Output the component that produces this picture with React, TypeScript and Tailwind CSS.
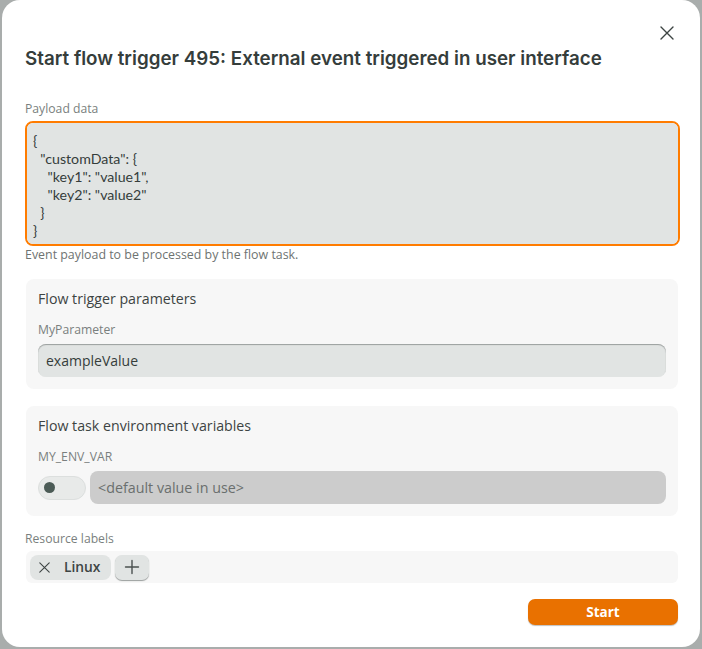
import React, { useState } from 'react';

const payload = `{
  "customData": {
    "key1": "value1",
    "key2": "value2"
  }
}`;

const CloseIcon = ({ size = 14, className = '' }: { size?: number; className?: string }) => (
  <svg width={size} height={size} viewBox="0 0 14 14" className={className} fill="none">
    <path d="M1 1L13 13M13 1L1 13" stroke="currentColor" strokeWidth="1.4" strokeLinecap="round" />
  </svg>
);

const PlusIcon = () => (
  <svg width="16" height="16" viewBox="0 0 16 16" fill="none">
    <path d="M8 1.5V14.5M1.5 8H14.5" stroke="currentColor" strokeWidth="1.4" strokeLinecap="round" />
  </svg>
);

const App = () => {
  const [text, setText] = useState(payload);
  const [param, setParam] = useState('exampleValue');

  return (
    <div
      className="w-[702px] h-[649px] bg-[#a9adac] pl-[2px] overflow-hidden"
      style={{ fontFamily: '"Open Sans", "Lato", sans-serif' }}
    >
      <div className="w-[698px] h-[647px] bg-white rounded-[18px] flex flex-col px-[23px]">
        <div className="flex justify-end pt-[26px] pr-[3px] h-[40px]">
          <button className="text-[#3d4443]">
            <CloseIcon />
          </button>
        </div>

        <h2
          className="text-[18.8px] font-semibold text-[#353d3b] leading-[24px] mt-[7px]"
          style={{ fontFamily: '"Inter", "Lato", sans-serif' }}
        >
          Start flow trigger 495: External event triggered in user interface
        </h2>

        <label className="text-[12.2px] text-[#7a7f7e] leading-[16px] mt-[30px] mb-[4px]">Payload data</label>
        <textarea
          value={text}
          onChange={(e) => setText(e.target.value)}
          spellCheck={false}
          className="block w-[655px] h-[125px] bg-[#e1e4e3] border-2 border-[#ff7c00] rounded-[8px] px-[6px] pt-[9px] pb-[7px] text-[14.2px] leading-[18px] text-[#353d3b] resize-none outline-none whitespace-pre"
          style={{ fontFamily: '"Lato", sans-serif' }}
        />
        <p className="text-[12.4px] text-[#6e7372] leading-[16px] mt-[1px]">
          Event payload to be processed by the flow task.
        </p>

        <div className="w-[652px] ml-[1px] mt-[16px] bg-[#f7f7f7] rounded-[8px] px-[12px] pt-[11px] pb-[12px]">
          <div className="text-[14.2px] text-[#3d4443] leading-[18px]">Flow trigger parameters</div>
          <div className="text-[12.2px] text-[#7a7f7e] leading-[16px] mt-[14px]">MyParameter</div>
          <input
            value={param}
            onChange={(e) => setParam(e.target.value)}
            className="block w-full h-[33px] mt-[6px] bg-[#e1e4e3] rounded-[8px] px-[8px] text-[14px] text-[#353d3b] outline-none shadow-[inset_0_1px_1px_#9a9e9d]"
          />
        </div>

        <div className="w-[652px] ml-[1px] mt-[17px] bg-[#f7f7f7] rounded-[8px] px-[12px] pt-[11px] pb-[12px]">
          <div className="text-[14.2px] text-[#3d4443] leading-[18px]">Flow task environment variables</div>
          <div className="text-[12.2px] text-[#7a7f7e] leading-[16px] mt-[14px]">MY_ENV_VAR</div>
          <div className="flex items-center gap-[4px] mt-[6px]">
            <div className="w-[48px] h-[24px] rounded-full bg-[#e8eae9] border border-[#dcdfde] flex items-center pl-[5px] shrink-0">
              <div className="w-[11px] h-[11px] rounded-full bg-[#4b5b56]" />
            </div>
            <div className="flex-1 h-[33px] bg-[#cccccc] rounded-[8px] px-[8px] flex items-center text-[14.3px] text-[#6a6f6e]">
              &lt;default value in use&gt;
            </div>
          </div>
        </div>

        <label className="text-[12.2px] text-[#7a7f7e] leading-[16px] mt-[15px]">Resource labels</label>
        <div className="w-[652px] ml-[1px] mt-[4px] h-[32px] bg-[#f7f7f7] rounded-[6px] flex items-center gap-[4px] px-[4px]">
          <div className="h-[25px] w-[81px] bg-[#e1e4e3] rounded-[8px] flex items-center gap-[14px] pl-[9px] text-[#3d4443]">
            <CloseIcon size={11} />
            <span className="text-[13.8px] font-semibold">Linux</span>
          </div>
          <button className="h-[25px] w-[34px] bg-[#e1e4e3] rounded-[7px] flex items-center justify-center text-[#4b5150] shadow-[0_1px_1px_#9a9e9d]">
            <PlusIcon />
          </button>
        </div>

        <div className="flex justify-end mt-[16px] mr-[-1px]">
          <button className="w-[150px] h-[26px] bg-[#e97100] rounded-[7px] text-white text-[13.5px] font-bold shadow-[0_1px_1px_rgba(0,0,0,0.25)]">
            Start
          </button>
        </div>
      </div>
    </div>
  );
};

export default App;
